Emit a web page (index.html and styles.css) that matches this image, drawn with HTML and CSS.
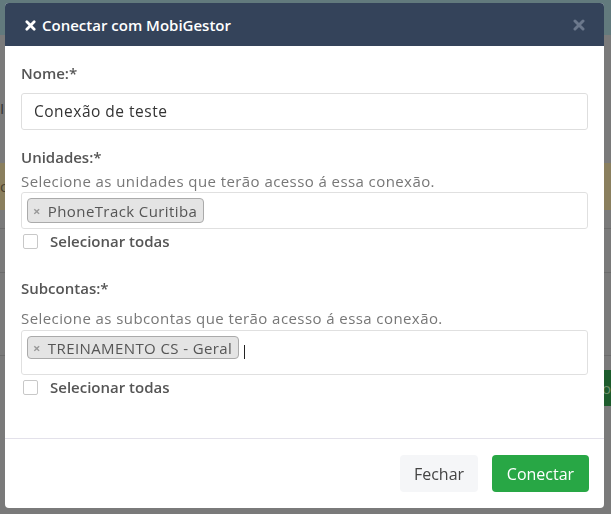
FILE: index.html
```html
<!DOCTYPE html>
<html lang="pt-BR">
<head>
  <meta charset="UTF-8" />
  <meta name="viewport" content="width=device-width, initial-scale=1.0" />
  <title>Conectar com MobiGestor</title>
  <link rel="stylesheet" href="styles.css">
</head>
<body>

  <!-- page behind the modal (already dimmed) -->
  <div class="page">
    <div class="topbar"></div>
    <div class="page-text">In</div>
    <div class="alert">o</div>
    <div class="row-line"></div>
    <div class="row-line"></div>
    <div class="row-line last"></div>
    <div class="green-row">
      <div class="green-bar">o</div>
    </div>
  </div>

  <div class="modal">
    <div class="modal-header">
      <h4 class="modal-title">
        <svg class="title-icon" viewBox="0 0 12 12" width="11" height="11">
          <path d="M2 2 L10 10 M10 2 L2 10" stroke="#fff" stroke-width="3" stroke-linecap="round" />
        </svg>
        Conectar com MobiGestor
      </h4>
      <span class="close">
        <svg viewBox="0 0 12 12" width="12" height="12">
          <path d="M2 2 L10 10 M10 2 L2 10" stroke="#6b788c" stroke-width="3" stroke-linecap="round" />
        </svg>
      </span>
    </div>

    <div class="modal-body">
      <div class="form-group">
        <label class="label">Nome:*</label>
        <div class="input">Conexão de teste</div>
      </div>

      <div class="form-group units">
        <label class="label">Unidades:*</label>
        <p class="help">Selecione as unidades que terão acesso á essa conexão.</p>
        <div class="select">
          <span class="tag"><span class="tag-x">×</span>PhoneTrack Curitiba</span>
        </div>
        <div class="check-row">
          <span class="checkbox"></span>
          <span class="check-label">Selecionar todas</span>
        </div>
      </div>

      <div class="form-group subs">
        <label class="label">Subcontas:*</label>
        <p class="help">Selecione as subcontas que terão acesso á essa conexão.</p>
        <div class="select tall">
          <span class="tag"><span class="tag-x">×</span>TREINAMENTO CS - Geral</span>
          <span class="caret"></span>
        </div>
        <div class="check-row">
          <span class="checkbox"></span>
          <span class="check-label">Selecionar todas</span>
        </div>
      </div>
    </div>

    <div class="modal-footer">
      <button class="btn btn-light">Fechar</button>
      <button class="btn btn-success">Conectar</button>
    </div>
  </div>

</body>
</html>
```

FILE: styles.css
```css
* {
  margin: 0;
  padding: 0;
  box-sizing: border-box;
}

html, body {
  height: 100%;
  font-family: 'Open Sans', 'Liberation Sans', sans-serif;
  background-color: #7a7a7a;
  overflow: hidden;
}

/* background page */
.page {
  position: relative;
  height: 100%;
}

.topbar {
  height: 35px;
  background-color: #627a7d;
}

.page-text {
  height: 128px;
  padding-top: 63px;
  font-size: 15px;
  color: #333;
  line-height: 20px;
}

.alert {
  height: 47px;
  background-color: #8a7f5e;
  color: #4a4230;
  font-size: 15px;
  line-height: 47px;
  margin-bottom: 18px;
}

.row-line {
  height: 44px;
  border-top: 1px solid #6c6c6c;
}

.row-line.last {
  height: 98px;
  margin-top: 39px;
}

.green-row {
  display: flex;
  justify-content: flex-end;
  margin-top: -83px;
}

.green-bar {
  width: 20px;
  height: 36px;
  background-color: #1d5b2c;
  color: #6f8f6a;
  font-size: 15px;
  line-height: 36px;
  text-align: right;
}

/* modal */
.modal {
  position: fixed;
  top: 3px;
  left: 5px;
  width: 599px;
  height: 505px;
  background-color: #fff;
  border-radius: 4px;
  overflow: hidden;
  display: flex;
  flex-direction: column;
}

.modal-header {
  height: 43px;
  background-color: #34435a;
  display: flex;
  align-items: center;
  justify-content: space-between;
  padding: 0 20px 0 20px;
}

.modal-title {
  color: #fff;
  font-size: 15px;
  font-weight: 600;
  display: flex;
  align-items: center;
  gap: 6px;
}

.title-icon {
  margin-top: 1px;
}

.close {
  display: flex;
  margin-right: -1px;
}

.modal-body {
  flex: 1;
  padding: 17px 16px 0 16px;
  color: #555;
  font-size: 15px;
  line-height: 20px;
}

.label {
  display: block;
  font-weight: 600;
  color: #555;
}

.input {
  margin-top: 10px;
  height: 37px;
  border: 1px solid #dedede;
  border-radius: 3px;
  padding: 0 12px;
  line-height: 35px;
  color: #333;
  font-size: 15.5px;
  letter-spacing: 0.5px;
}

.units {
  margin-top: 17px;
}

.subs {
  margin-top: 27px;
}

.help {
  margin-top: 4px;
  color: #777;
  letter-spacing: 0.42px;
}

.subs .help {
  margin-top: 10px;
}

.select {
  margin-top: 1px;
  height: 37px;
  border: 1px solid #e0e0e0;
  border-radius: 3px;
  padding: 5px 5px;
  display: flex;
  align-items: flex-start;
}

.select.tall {
  margin-top: 2px;
  height: 45px;
}

.tag {
  display: inline-flex;
  align-items: center;
  height: 25px;
  padding: 0 6px 0 5px;
  background-color: #e4e4e4;
  border: 1px solid #aaa;
  border-radius: 4px;
  font-size: 15px;
  letter-spacing: 0.4px;
  color: #555;
}

.tall .tag {
  height: 23px;
}

.tag-x {
  color: #999;
  font-weight: 700;
  font-size: 13px;
  margin-right: 7px;
}

.caret {
  width: 1px;
  height: 14px;
  background-color: #222;
  margin: 9px 0 0 5px;
}

.check-row {
  display: flex;
  align-items: center;
  margin-top: 2px;
  height: 20px;
}

.checkbox {
  width: 15px;
  height: 15px;
  border: 1px solid #c8c8c8;
  border-radius: 2px;
  margin-left: 2px;
  margin-right: 12px;
}

.check-label {
  font-weight: 600;
  color: #555;
}

.modal-footer {
  border-top: 1px solid #e3e1ea;
  display: flex;
  justify-content: flex-end;
  gap: 14px;
  padding: 16px 15px 16px 15px;
}

.btn {
  height: 37px;
  border: none;
  border-radius: 4px;
  font-family: inherit;
  font-size: 16px;
  padding: 0 13px;
}

.btn-light {
  width: 78px;
  background-color: #f5f6f8;
  color: #444;
}

.btn-success {
  width: 97px;
  background-color: #28a745;
  color: #fff;
}
```
